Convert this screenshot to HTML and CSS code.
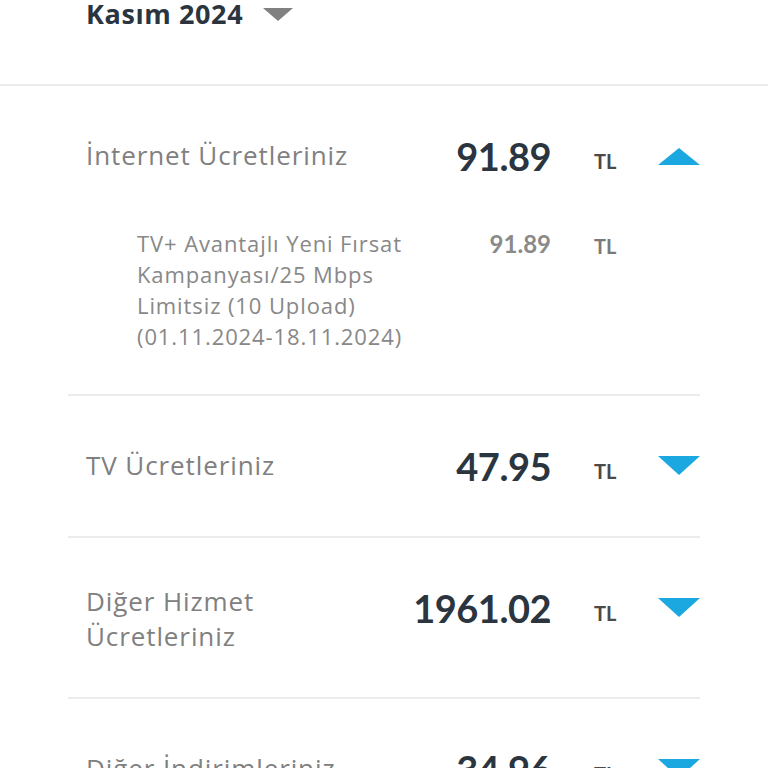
FILE: index.html
```html
<!DOCTYPE html>
<html lang="tr">
<head>
  <meta charset="UTF-8" />
  <meta name="viewport" content="width=device-width, initial-scale=1.0" />
  <title>Fatura Detayı</title>
  <link rel="stylesheet" href="styles.css">
</head>
<body>
  <!-- Period selector -->
  <div class="period">
    <span class="period-label">Kasım 2024</span>
    <span class="caret"></span>
  </div>

  <div class="bill-list">
    <!-- Internet (expanded) -->
    <div class="bill-group open">
      <div class="bill-row">
        <div class="bill-label">İnternet Ücretleriniz</div>
        <div class="bill-amount">91.89</div>
        <div class="bill-currency">TL</div>
        <div class="arrow up"></div>
      </div>
      <div class="bill-sub">
        <div class="sub-label">TV+ Avantajlı Yeni Fırsat<br>Kampanyası/25 Mbps<br>Limitsiz (10 Upload)<br>(01.11.2024-18.11.2024)</div>
        <div class="sub-amount">91.89</div>
        <div class="sub-currency">TL</div>
      </div>
    </div>

    <div class="bill-group">
      <div class="bill-row">
        <div class="bill-label">TV Ücretleriniz</div>
        <div class="bill-amount">47.95</div>
        <div class="bill-currency">TL</div>
        <div class="arrow"></div>
      </div>
    </div>

    <div class="bill-group tall">
      <div class="bill-row">
        <div class="bill-label multi">Diğer Hizmet<br>Ücretleriniz</div>
        <div class="bill-amount">1961.02</div>
        <div class="bill-currency">TL</div>
        <div class="arrow"></div>
      </div>
    </div>

    <div class="bill-group">
      <div class="bill-row">
        <div class="bill-label">Diğer İndirimleriniz</div>
        <div class="bill-amount">34.96</div>
        <div class="bill-currency">TL</div>
        <div class="arrow"></div>
      </div>
    </div>
  </div>
</body>
</html>
```

FILE: styles.css
```css
/* Base */
body {
  margin: 0;
  background: #ffffff;
  font-family: 'Open Sans', 'Noto Sans', sans-serif;
  color: #2a3540;
  overflow: hidden;
}

/* Period selector at the top */
.period {
  display: flex;
  align-items: center;
  gap: 20px;
  padding: 0 0 57px 86px;
  border-bottom: 2px solid #ececec;
}

.period-label {
  font-size: 27px;
  line-height: 27px;
  font-weight: 700;
  color: #2a3540;
  letter-spacing: 0.6px;
}

.caret {
  width: 0;
  height: 0;
  border-left: 15px solid transparent;
  border-right: 15px solid transparent;
  border-top: 13px solid #808080;
  margin-top: 1px;
}

/* Bill groups */
.bill-list {
  margin: 0 68px;
}

.bill-group {
  border-bottom: 2px solid #ececec;
  padding: 48px 0 48px 18px;
}

.bill-group.open {
  padding-bottom: 42px;
}

.bill-group.tall {
  padding-bottom: 43px;
}

.bill-row,
.bill-sub {
  display: grid;
  grid-template-columns: 1fr auto 107px 42px;
  align-items: start;
}

.bill-label {
  font-size: 26px;
  line-height: 35px;
  color: #808080;
  letter-spacing: 0.9px;
  padding-top: 4px;
}

.bill-label.multi {
  padding-top: 0;
  margin-top: -2px;
}

.bill-amount {
  font-family: 'Lato', 'Open Sans', sans-serif;
  font-size: 38px;
  line-height: 44px;
  font-weight: 700;
  color: #2a3540;
  text-align: right;
  letter-spacing: -0.5px;
}

.bill-currency {
  font-family: 'Lato', 'Open Sans', sans-serif;
  font-size: 20px;
  font-weight: 700;
  color: #4a4a4a;
  padding: 15px 0 0 43px;
}

.arrow {
  width: 0;
  height: 0;
  border-left: 21px solid transparent;
  border-right: 21px solid transparent;
  border-top: 19px solid #1ba8e0;
  margin-top: 12px;
}

.arrow.up {
  border-top: none;
  border-bottom: 17px solid #1ba8e0;
  margin-top: 14px;
}

/* Expanded detail line */
.bill-sub {
  margin-top: 50px;
}

.sub-label {
  font-size: 22px;
  line-height: 31px;
  color: #888888;
  letter-spacing: 0.9px;
  white-space: nowrap;
  padding-left: 51px;
}

.sub-amount {
  font-family: 'Lato', 'Open Sans', sans-serif;
  font-size: 24px;
  line-height: 31px;
  font-weight: 700;
  color: #8a8a8a;
  text-align: right;
}

.sub-currency {
  font-family: 'Lato', 'Open Sans', sans-serif;
  font-size: 20px;
  font-weight: 700;
  color: #7a7a7a;
  padding: 6px 0 0 43px;
}
```
